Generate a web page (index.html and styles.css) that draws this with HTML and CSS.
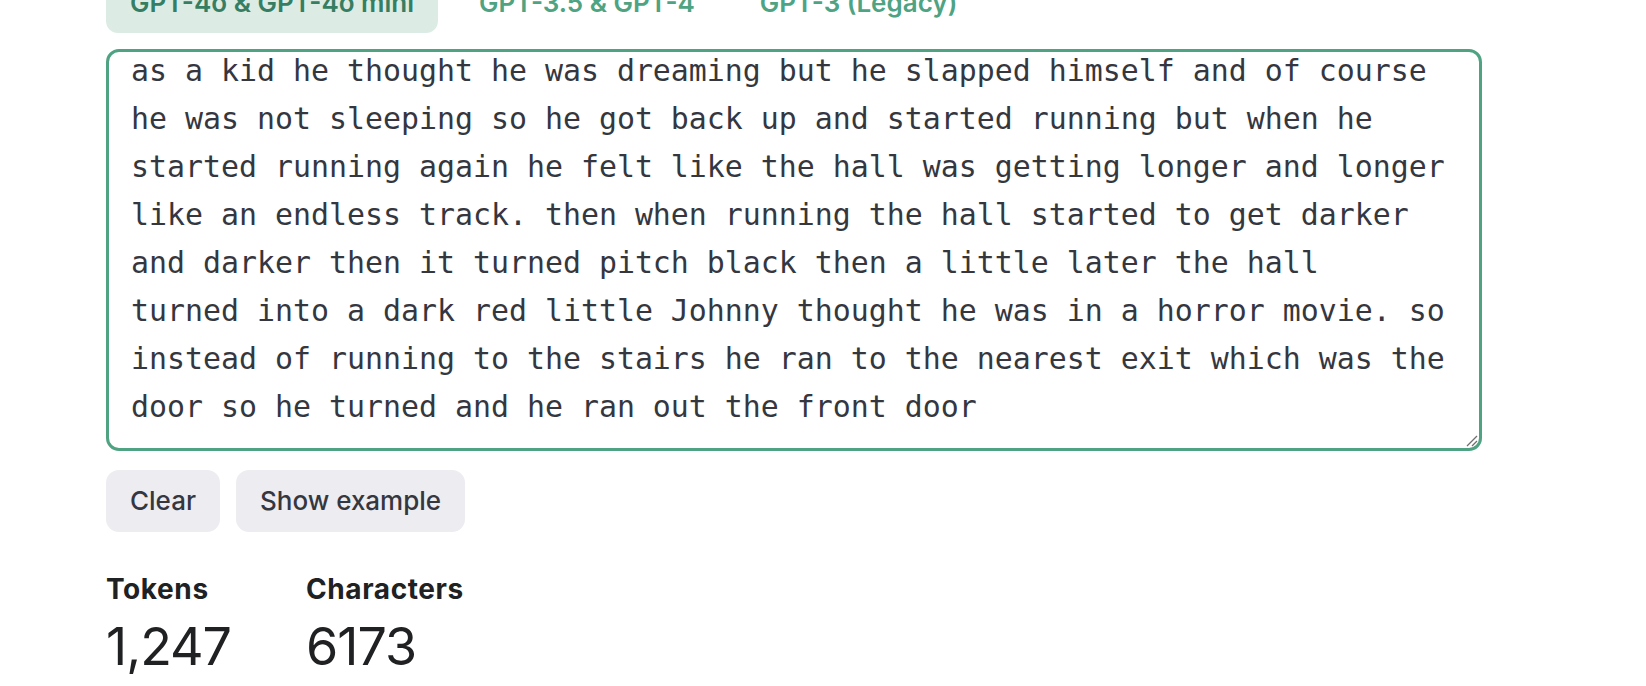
FILE: index.html
```html
<!DOCTYPE html>
<html lang="en">
<head>
<meta charset="utf-8">
<title>Tokenizer</title>
<link rel="stylesheet" href="styles.css">
</head>
<body>
<main class="page">
  <nav class="tabs">
    <button class="tab tab-active">GPT-4o &amp; GPT-4o mini</button>
    <button class="tab">GPT-3.5 &amp; GPT-4</button>
    <button class="tab">GPT-3 (Legacy)</button>
  </nav>

  <div class="editor">
    <div class="editor-text">as a kid he thought he was dreaming but he slapped himself and of course
he was not sleeping so he got back up and started running but when he
started running again he felt like the hall was getting longer and longer
like an endless track. then when running the hall started to get darker
and darker then it turned pitch black then a little later the hall
turned into a dark red little Johnny thought he was in a horror movie. so
instead of running to the stairs he ran to the nearest exit which was the
door so he turned and he ran out the front door</div>
    <svg class="grip" width="14" height="14" viewBox="0 0 14 14" aria-hidden="true">
      <line x1="13" y1="3" x2="3" y2="13" stroke="#6e6e6e" stroke-width="1.3"/>
      <line x1="13" y1="8" x2="8" y2="13" stroke="#6e6e6e" stroke-width="1.3"/>
    </svg>
  </div>

  <div class="actions">
    <button class="btn">Clear</button>
    <button class="btn">Show example</button>
  </div>

  <section class="stats">
    <div class="stat">
      <div class="stat-label">Tokens</div>
      <div class="stat-value">1,247</div>
    </div>
    <div class="stat">
      <div class="stat-label">Characters</div>
      <div class="stat-value">6173</div>
    </div>
  </section>
</main>
</body>
</html>
```

FILE: styles.css
```css
* { box-sizing: border-box; }

html, body {
  margin: 0;
  padding: 0;
  background: #ffffff;
  overflow: hidden;
}

body {
  font-family: Inter, "Noto Sans", "Liberation Sans", sans-serif;
  color: #202123;
}

.page {
  padding-left: 106px;
  width: 1482px;
}

.tabs {
  display: flex;
  gap: 17px;
  margin-top: -27px;
}

.tab {
  font-family: inherit;
  font-size: 26px;
  line-height: 36px;
  font-weight: 600;
  letter-spacing: 0;
  padding: 12px 24px;
  border: none;
  border-radius: 12px;
  background: transparent;
  color: #4ea383;
  cursor: pointer;
}

.tab-active {
  background: #dcece5;
  color: #367e63;
}

.editor {
  position: relative;
  margin-top: 16px;
  height: 402px;
  border: 3px solid #4fa382;
  border-radius: 13px;
  overflow: hidden;
  background: #fff;
}

.editor-text {
  margin-top: -5px;
  padding: 0 22px;
  font-family: "DejaVu Sans Mono", "Liberation Mono", monospace;
  font-size: 29.9px;
  line-height: 48px;
  color: #353740;
  white-space: pre;
}

.grip {
  position: absolute;
  right: 1px;
  bottom: 1px;
}

.actions {
  display: flex;
  gap: 16px;
  margin-top: 19px;
}

.btn {
  font-family: inherit;
  font-size: 26px;
  font-weight: 500;
  line-height: 30px;
  height: 62px;
  padding: 0 24px;
  border: none;
  border-radius: 13px;
  background: #ececf1;
  color: #353740;
  letter-spacing: 0;
}

.stats {
  display: grid;
  grid-template-columns: 200px 200px;
  margin-top: 40px;
}

.stat-label {
  font-size: 28px;
  line-height: 34px;
  font-weight: 700;
  letter-spacing: 0.6px;
  color: #202123;
}

.stat-value {
  font-size: 52px;
  line-height: 62px;
  font-weight: 400;
  letter-spacing: -1px;
  margin-top: 10px;
  color: #202123;
}
```
